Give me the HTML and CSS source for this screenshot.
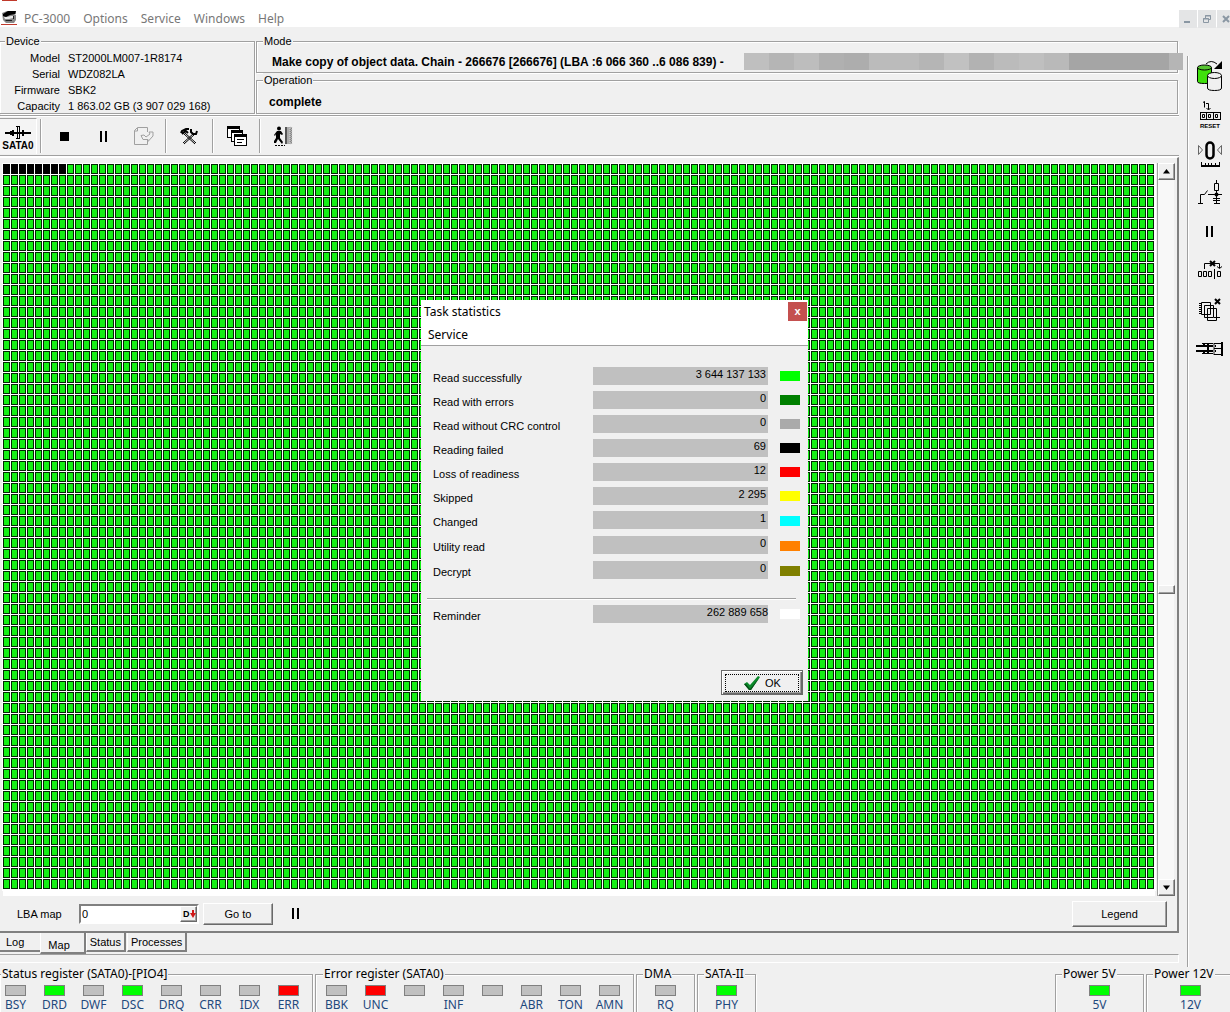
FILE: index.html
```html
<!DOCTYPE html>
<html lang="en">
<head>
<meta charset="utf-8">
<title>PC-3000</title>
<link rel="stylesheet" href="styles.css">
</head>
<body>
<div class="app">
  <header class="menubar">
    <svg class="logo" width="16" height="28" viewBox="0 0 16 28" aria-hidden="true">
      <path d="M1 0h15v1H1z" fill="#c0392b"/>
      <path d="M1 13l5-2h9v3l-2 1h2v5l-2 3H5l-3-3z" fill="#888"/>
      <path d="M2 14l5-3h8l-1 3-5 1-4 2-3-1z" fill="#000"/>
      <path d="M3 17h3l4-1h2v2l-4 1-4 0z" fill="#e8e8e8"/>
      <path d="M4 20h7v1H5zM12 16h1v3h-1z" fill="#222"/>
      <path d="M0 24h16v1H0z" fill="#c0392b"/>
    </svg>
    <nav class="menu">
      <a href="#">PC-3000</a><a href="#">Options</a><a href="#">Service</a><a href="#">Windows</a><a href="#">Help</a>
    </nav>
    <div class="winbtns">
      <button aria-label="Minimize"><svg width="18" height="18"><path d="M5 11h6v2H5z" fill="#8a97a3"/></svg></button>
      <button aria-label="Restore"><svg width="18" height="18" fill="none" stroke="#8a97a3"><path d="M7.500 8V5.500h5v4h-2M7 6h6M5.500 8.500h5v4h-5zM5 9h6"/></svg></button>
      <button aria-label="Close"><svg width="18" height="18" fill="none" stroke="#8a97a3" stroke-width="2"><path d="M6 6l6 6M12 6l-6 6"/></svg></button>
    </div>
  </header>

  <div class="body">
    <main class="main">
      <section class="info">
        <fieldset class="group device">
          <legend>Device</legend>
          <dl>
            <dt>Model</dt><dd>ST2000LM007-1R8174</dd>
            <dt>Serial</dt><dd>WDZ082LA</dd>
            <dt>Firmware</dt><dd>SBK2</dd>
            <dt>Capacity</dt><dd>1 863.02 GB (3 907 029 168)</dd>
          </dl>
        </fieldset>
        <div class="info-right">
          <fieldset class="group mode">
            <legend>Mode</legend>
            <div class="mode-line"><b>Make copy of object data. Chain - 266676 [266676] (LBA :6 066 360 ..6 086 839) -</b><span class="redacted"></span></div>
          </fieldset>
          <fieldset class="group operation">
            <legend>Operation</legend>
            <b>complete</b>
          </fieldset>
        </div>
      </section>

      <section class="toolbar">
        <button class="sata"><svg width="28" height="14" shape-rendering="crispEdges"><path d="M1 6h26v2H1zM8 4h2v6H8zM18 4h2v6h-2zM12 0h4v1h-4zM12 12h4v1h-4zM13 0h1v13h-1zM15 0h1v13h-1zM6 5h2v4H6z"/></svg>SATA0</button>
        <span class="sep"></span>
        <button class="tool" aria-label="Stop"><svg width="20" height="20" shape-rendering="crispEdges"><path d="M5 6h9v9H5z"/></svg></button>
        <button class="tool" aria-label="Pause"><svg width="20" height="20" shape-rendering="crispEdges"><path d="M6 5h2v11H6zM11 5h2v11h-2z"/></svg></button>
        <button class="tool" aria-label="Copy"><svg width="22" height="20" fill="none" stroke="#a0a0a0"><path d="M15.500 6V1.500H5.500L2.500 4.500V18.500H15.500V13M5.500 2V5H2.500M9 9.500l2 4h5v2l5-5.500V6h-4l1 2-4 3-2-2z"/></svg></button>
        <span class="sep"></span>
        <button class="tool" aria-label="Tools"><svg width="20" height="20" fill="none" stroke="#000"><path d="M5 7l11 10M4 8l11 10M14 7L3 17M15 8L4 18"/><path d="M1 7l1-2 4-2h3M2 8l4-3 2 2M11 3v3l2 2h3l1-3" stroke-width="2"/></svg></button>
        <span class="sep"></span>
        <button class="tool" aria-label="Windows"><svg width="20" height="22" shape-rendering="crispEdges" fill="#fff" stroke="#000"><path d="M.5 1.500h12v11H.5z"/><path d="M0 2.500h13" stroke-width="3"/><path d="M4.500 5.500h11v11h-11z"/><path d="M4 6.500h12" stroke-width="3"/><path d="M7.500 9.500h12v11h-12z"/><path d="M7 10.500h13" stroke-width="2"/><path d="M10 14.500h7M10 17.500h5"/></svg></button>
        <span class="sep"></span>
        <button class="tool" aria-label="Exit"><svg width="20" height="22"><path d="M11 2h7v17h-7z" fill="#aaa"/><path d="M11 2h2v17h-2z" fill="#555"/><path d="M16 2h2v17h-2z" fill="#888" stroke="#ddd" stroke-dasharray="1 1"/><circle cx="5" cy="3.500" r="2"/><path d="M3 6h4l2 3-1 1-2-1v4l3 4-1 2-4-5-2 4H0v-2l2-3V9l-1 2-1-1z"/><path d="M1 20.500h10" stroke="#000" stroke-dasharray="2 1"/></svg></button>
      </section>

      <section class="panel">
        <div class="map-row">
          <svg class="map" role="img" aria-label="Sector map">
            <defs>
              <pattern id="cell" width="8" height="11" patternUnits="userSpaceOnUse">
                <rect width="7" height="10" fill="#002800"/>
                <rect x="1" y="1" width="5" height="8" fill="#14f014"/>
              </pattern>
              <pattern id="bad" width="8" height="11" patternUnits="userSpaceOnUse"><rect width="7" height="10"/></pattern>
            </defs>
            <rect width="100%" height="100%" fill="url(#cell)"/>
            <rect width="64" height="11" fill="#fff"/>
            <rect width="64" height="11" fill="url(#bad)"/>
          </svg>
          <div class="scroll">
            <button aria-label="Scroll up"><svg width="8" height="5"><path d="M0 4.500h7L3.500 0z"/></svg></button>
            <span class="thumb"></span>
            <button aria-label="Scroll down"><svg width="8" height="5"><path d="M0 .5h7L3.500 5z"/></svg></button>
          </div>
        </div>
        <div class="controls">
          <label for="lba">LBA map</label>
          <span class="field"><input id="lba" type="text" value="0"><button class="dec" aria-label="Decimal">D<svg width="6" height="8"><path d="M2 0h2v3h2L3 8 0 3h2z" fill="#d01818"/></svg></button></span>
          <button class="btn goto">Go to</button>
          <svg class="pause" width="8" height="11" shape-rendering="crispEdges" aria-hidden="true"><path d="M0 0h2v11H0zM5 0h2v11H5z"/></svg>
          <button class="btn legend-btn">Legend</button>
        </div>
      </section>

      <nav class="tabs"><button class="t-log">Log</button><button class="on">Map</button><button>Status</button><button>Processes</button></nav>
      <div class="strip"></div>
    </main>

    <aside class="side">
      <button aria-label="Copy drive"><svg width="26" height="32" fill="none" stroke="#000"><path d="M.5 7.500v14q0 2 7 2t7-2v-14" fill="#3fe00c"/><ellipse cx="7.500" cy="7.500" rx="7" ry="2.500" fill="#56c431"/><path d="M10.500 15.500v12.500q0 2.500 7 2.500t7-2.500v-12.500" fill="#f0f0f0"/><ellipse cx="17.500" cy="15.500" rx="7" ry="3" fill="#f0f0f0"/><path d="M9 4q5-5 11 0"/><path d="M25 1v8h-8z" fill="#000" stroke="none"/></svg></button>
      <button aria-label="Reset counter"><svg width="26" height="30" fill="none" stroke="#000"><path d="M6 2.500l1.500-1v6M9 3.500h2.500v6M9.500 8l2 2 2-2"/><path d="M3 12.500h21M3 19.500h21M3.500 12v8M9.500 12v8M16.500 12v8M23.500 12v8"/><path d="M5.500 14.500h2v3h-2zM11.500 14.500h2v3h-2zM18.500 14.500h2v3h-2z"/><text x="13" y="28" text-anchor="middle" class="tiny">RESET</text></svg></button>
      <button aria-label="Zero position"><svg width="26" height="28" fill="none" stroke="#000"><rect x="9.500" y="2.500" width="7" height="16" rx="3.500" stroke-width="2.500"/><path d="M1.500 5.500v9l4-4.500zM24.500 5.500v9l-4-4.500z" stroke="#666"/><path d="M4 26h19" stroke-width="2"/><path d="M4.500 22v4M8.500 23v3M11.500 23v3M14.500 23v3M18.500 23v3M22.500 22v4"/></svg></button>
      <button aria-label="Power switch"><svg width="26" height="28" fill="none" stroke="#000"><path d="M1 24.500h5M3.500 24V15.500h4l3-4M11 15.500h14M19.500 1v24M16 19.500h7M16 21.500h7M17 24.500h6"/><path d="M17.500 4.500h4v7h-4z" fill="#f0f0f0"/><circle cx="19.500" cy="15.500" r="2" fill="#000" stroke="none"/></svg></button>
      <button aria-label="Pause"><svg width="26" height="26" shape-rendering="crispEdges"><path d="M9 7h2v11H9zM14 7h2v11h-2z"/></svg></button>
      <button aria-label="Skip block"><svg width="26" height="28" fill="none" stroke="#000"><path d="M1.500 14.500h3v5h-3zM6.500 14.500h3v5h-3zM11.500 14.500h3v5h-3zM20.500 14.500h3v5h-3zM17.500 12v10M7.500 12V6.500h15V11M20 9.500l2.500 2 2.500-2"/><path d="M13 4l5 5M18 4l-5 5" stroke-width="2"/></svg></button>
      <button aria-label="Delete pages"><svg width="26" height="24" fill="#f0f0f0" stroke="#000"><path d="M4.500 4.500h9v12h-9zM7.500 7.500h9v12h-9zM10.500 10.500h9v12h-9z"/><path d="M2 5.500h3M2 7.500h3M2 9.500h3M2 11.500h3M2 13.500h3M2 15.500h3M17 19.500h6M19.500 17v5"/><path d="M18 1l5 5M23 1l-5 5" stroke-width="2"/></svg></button>
      <button aria-label="Connector"><svg width="28" height="20" fill="none" stroke="#000"><path d="M0 7h20M0 12h20" stroke-width="2"/><path d="M6 4.500h11M6 14.500h11"/><path d="M12 5v10M8 5v3M8 11v4" stroke-width="2"/><path d="M18 4v12" stroke="#888" stroke-width="2"/><path d="M18 4.500h8M18 9.500h8M18 15.500h8"/><path d="M26 3v14" stroke-width="2"/></svg></button>
    </aside>
  </div>

  <footer class="status">
    <fieldset class="group reg first"><legend>Status register (SATA0)-[PIO4]</legend>
      <div class="leds">
        <span><i></i>BSY</span><span><i class="g"></i>DRD</span><span><i></i>DWF</span><span><i class="g"></i>DSC</span><span><i></i>DRQ</span><span><i></i>CRR</span><span><i></i>IDX</span><span><i class="r"></i>ERR</span>
      </div></fieldset>
    <fieldset class="group reg"><legend>Error register (SATA0)</legend>
      <div class="leds">
        <span><i></i>BBK</span><span><i class="r"></i>UNC</span><span><i></i></span><span><i></i>INF</span><span><i></i></span><span><i></i>ABR</span><span><i></i>TON</span><span><i></i>AMN</span>
      </div></fieldset>
    <fieldset class="group small"><legend>DMA</legend><div class="leds"><span><i></i>RQ</span></div></fieldset>
    <fieldset class="group small"><legend>SATA-II</legend><div class="leds"><span><i class="g"></i>PHY</span></div></fieldset>
    <fieldset class="group power push"><legend>Power 5V</legend><div class="leds"><span><i class="g"></i>5V</span></div></fieldset>
    <fieldset class="group power"><legend>Power 12V</legend><div class="leds"><span><i class="g"></i>12V</span></div></fieldset>
  </footer>

  <section class="dialog" role="dialog" aria-labelledby="dlg-title">
    <header><h1 id="dlg-title">Task statistics</h1><button class="close" aria-label="Close">x</button></header>
    <nav><a href="#">Service</a></nav>
    <table>
      <tr><th>Read successfully</th><td><div>3 644 137 133</div></td><td><i class="c-ok"></i></td></tr>
      <tr><th>Read with errors</th><td><div>0</div></td><td><i class="c-err"></i></td></tr>
      <tr><th>Read without CRC control</th><td><div>0</div></td><td><i class="c-crc"></i></td></tr>
      <tr><th>Reading failed</th><td><div>69</div></td><td><i class="c-fail"></i></td></tr>
      <tr><th>Loss of readiness</th><td><div>12</div></td><td><i class="c-loss"></i></td></tr>
      <tr><th>Skipped</th><td><div>2 295</div></td><td><i class="c-skip"></i></td></tr>
      <tr class="tall"><th>Changed</th><td><div>1</div></td><td><i class="c-chg"></i></td></tr>
      <tr class="tall"><th>Utility read</th><td><div>0</div></td><td><i class="c-util"></i></td></tr>
      <tr class="tall"><th>Decrypt</th><td><div>0</div></td><td><i class="c-dec"></i></td></tr>
    </table>
    <hr>
    <table>
      <tr><th>Reminder</th><td><div class="flush">262 889 658</div></td><td><i class="c-rem"></i></td></tr>
    </table>
    <div class="actions"><button class="ok"><span><svg width="18" height="16"><path d="M1 9l3-2 3 3 8-9 2 1L8 15H6z" fill="#0a8a2a"/><path d="M1 9l2 0 4 5 10-12L8 15H6z" fill="#064d16"/></svg>OK</span></button></div>
  </section>
</div>
</body>
</html>
```
FILE: styles.css
```css
* { box-sizing: border-box; }
body {
  margin: 0;
  background: #f0f0f0;
  color: #000;
  font: 11px/16px "Liberation Sans", Arial, sans-serif;
}
button, input { font: inherit; color: inherit; }
button { border: 0; padding: 0; background: none; }
svg { display: block; flex: none; }
a { color: inherit; text-decoration: none; }

.app {
  position: relative;
  display: flex;
  flex-direction: column;
  min-height: 100vh;
  overflow: hidden;
}

/* Menu bar */
.menubar {
  display: flex;
  height: 27px;
  background: #fff;
  padding-left: 1px;
}
.menu {
  display: flex;
  gap: 13px;
  padding: 10px 0 0 7px;
  font: 12px/17px "Noto Sans", sans-serif;
  color: #777;
}
.winbtns {
  display: flex;
  gap: 1px;
  margin: 10px -5px 0 auto;
}
.winbtns button { width: 18px; height: 18px; background: #e4e5e6; }

/* Work area */
.body { display: flex; flex: 1; }
.main {
  flex: 1;
  min-width: 0;
  display: flex;
  flex-direction: column;
}

.group {
  margin: 0;
  padding: 0;
  min-width: 0;
  border: 1px solid #a0a0a0;
  box-shadow: 1px 1px 0 #fff, inset 1px 1px 0 #fff;
}
.group legend {
  padding: 0 1px;
  margin-left: 5px;
  line-height: 14px;
  background: #f0f0f0;
}

.info {
  display: flex;
  gap: 1px;
  padding: 7px 1px 1px 0;
  border-bottom: 1px solid #a0a0a0;
  box-shadow: 0 1px 0 #fff;
}
.device { width: 255px; border-left: 0; }
.device dl {
  display: grid;
  grid-template-columns: 60px 1fr;
  column-gap: 8px;
  height: 64px;
  margin: 0;
  padding-top: 2px;
}
.device dt { text-align: right; }
.device dd { margin: 0; }
.info-right {
  flex: 1;
  min-width: 0;
  display: flex;
  flex-direction: column;
}
.info-right .group legend { margin-left: 6px; }
.mode { height: 39px; }
.operation { height: 41px; }
.mode b, .operation b { font-size: 12px; }
.operation b { display: block; padding: 7px 0 0 12px; }
.mode-line {
  display: flex;
  align-items: center;
  margin-right: -6px;
  padding: 5px 0 0 15px;
}
.mode-line b { flex: none; min-width: 471px; }
.redacted {
  flex: 1;
  height: 17px;
  margin-left: 1px;
  background: linear-gradient(90deg,
    #bfbfbf 0 25px, #b5b5b5 0 50px, #bdbdbd 0 75px, #b0b0b0 0 100px,
    #adadad 0 125px, #bbb 0 175px, #b5b5b5 0 200px, #c1c1c1 0 225px,
    #b2b2b2 0 250px, #bbb 0 275px, #bfbfbf 0 300px, #b9b9b9 0 325px,
    #a5a5a5 0 425px, #b5b5b5 0);
}

.toolbar {
  display: flex;
  align-items: center;
  height: 40px;
  border-bottom: 1px solid #a0a0a0;
  box-shadow: 0 1px 0 #fff;
}
.sata {
  display: flex;
  flex-direction: column;
  align-items: center;
  width: 37px;
  height: 36px;
  padding-top: 7px;
  border-top: 1px solid #a0a0a0;
  border-right: 1px solid #fff;
  background: #f4f4f4;
  font-size: 10px;
  font-weight: bold;
  line-height: 12px;
}
.sep {
  width: 2px;
  height: 34px;
  margin: 0 3px;
  background: linear-gradient(90deg, #a0a0a0 50%, #fff 50%);
}
.tool {
  display: flex;
  align-items: center;
  justify-content: center;
  width: 39px;
  height: 34px;
}

/* Map panel */
.panel {
  flex: 1;
  display: flex;
  flex-direction: column;
  margin-top: 1px;
  padding: 5px 3px 0 2px;
  border: solid;
  border-width: 1px 2px 2px 0;
  border-color: #fff #808080 #808080 #fff;
}
.map-row { flex: 1; display: flex; }
.map {
  flex: 1;
  min-width: 0;
  height: auto;
  margin: 1px 0 6px 1px;
  background: #fff;
  box-shadow: 0 0 0 1px #fff, 0 6px 0 #fff;
}
.scroll {
  display: flex;
  flex-direction: column;
  justify-content: space-between;
  width: 17px;
  margin-left: 2px;
  border-left: 1px solid #a0a0a0;
  background: #f8f8f8;
}
.scroll button, .thumb, .btn, .dec {
  border: 1px solid;
  border-color: #fff #696969 #696969 #fff;
  box-shadow: inset -1px -1px 0 #a0a0a0;
  background: #f0f0f0;
}
.scroll button {
  display: flex;
  align-items: center;
  justify-content: center;
  width: 17px;
  height: 17px;
}
.thumb { width: 17px; height: 9px; margin-top: 120px; }

.controls {
  display: flex;
  align-items: center;
  height: 35px;
  padding: 0 7px 0 15px;
}
.controls label { width: 62px; }
.field {
  display: flex;
  width: 120px;
  height: 20px;
  border: 2px solid;
  border-color: #808080 #fff #fff #808080;
  background: #fff;
}
.field input {
  flex: 1;
  min-width: 0;
  border: 0;
  padding: 0 1px;
  background: none;
  outline: 0;
}
.dec {
  display: flex;
  align-items: center;
  width: 17px;
  padding-left: 2px;
  font-size: 9px;
  font-weight: bold;
}
.btn { height: 22px; }
.goto { width: 70px; margin: 0 19px 0 4px; }
.legend-btn { width: 95px; height: 26px; margin-left: auto; }

.tabs { display: flex; height: 21px; align-items: flex-start; }
.tabs button {
  height: 19px;
  padding: 0 3px;
  margin-right: 1px;
  border: solid;
  border-width: 0 2px 2px 1px;
  border-color: #fff #808080 #808080 #fff;
}
.tabs .t-log { padding: 0 16px 0 6px; border-width: 0 0 2px; margin: 0; }
.tabs .on { height: 21px; padding: 4px 14px 0 7px; margin: 0; }
.strip {
  height: 9px;
  margin-bottom: 4px;
  border: solid;
  border-width: 1px 1px 1px 0;
  border-color: #a0a0a0 #fff #fff;
}

.side {
  display: flex;
  flex-direction: column;
  width: 43px;
  margin: 29px 0 0 8px;
  padding-left: 2px;
  border-left: 1px solid #a0a0a0;
  box-shadow: inset 1px 0 0 #fff;
}
.side button {
  display: flex;
  align-items: center;
  justify-content: center;
  height: 39px;
}
.tiny {
  font: bold 6px "Liberation Sans", Arial, sans-serif;
  fill: #000;
  stroke: none;
}

/* Status bar */
.status {
  display: flex;
  gap: 2px;
  height: 45px;
  font: 12px/15px "Noto Sans", sans-serif;
}
.status .group { height: 60px; }
.status .group legend { line-height: 14px; margin-left: 6px; padding: 0 1px; }
.status .first legend { margin-left: 1px; }
.reg { width: 319px; padding-left: 1px; }
.status .first { width: 313px; border-left: 0; padding: 0; }
.small { width: 59px; }
.power { width: 89px; }
.power:last-child { margin-right: -5px; }
.push { margin-left: auto; }
.leds { display: flex; padding-top: 4px; color: #1f497d; }
.leds span { width: 39px; text-align: center; }
.first .leds { margin-left: -4px; }
.small .leds, .power .leds { justify-content: center; }
.leds i {
  display: block;
  width: 21px;
  height: 11px;
  margin: 0 auto 1px;
  border: 1px solid #808080;
  background: #c0c0c0;
}
.leds .g { background: #0f0; }
.leds .r { background: #f00; }

/* Task statistics window */
.dialog {
  position: absolute;
  top: 300px;
  left: 50%;
  width: 387px;
  height: 401px;
  margin-left: -194px;
  display: flex;
  flex-direction: column;
  background: #f0f0f0;
}
.dialog header {
  display: flex;
  justify-content: space-between;
  height: 24px;
  padding: 2px 1px 0 3px;
  background: #fff;
}
.dialog h1 { margin: 0; font: 12px/19px "Noto Sans", sans-serif; }
.close {
  width: 19px;
  height: 19px;
  background: #c4504f;
  color: #fff;
  font-weight: bold;
  line-height: 17px;
}
.dialog nav {
  height: 22px;
  padding: 2px 7px 0;
  border-bottom: 1px solid #a0a0a0;
  background: #fff;
  font: 12px/17px "Noto Sans", sans-serif;
}
.dialog table {
  width: 367px;
  margin: 21px 0 0 12px;
  border-collapse: collapse;
  table-layout: fixed;
}
.dialog tr { height: 24px; }
.dialog .tall { height: 25px; }
.dialog th, .dialog td { padding: 0; vertical-align: top; }
.dialog th {
  width: 160px;
  padding-top: 3px;
  font-weight: normal;
  text-align: left;
}
.dialog td:last-child { width: 32px; }
.dialog td div {
  height: 18px;
  padding-right: 2px;
  background: #c0c0c0;
  line-height: 15px;
  text-align: right;
}
.dialog td .flush { padding: 0; }
.dialog td i { display: block; width: 20px; height: 10px; margin: 4px 0 0 12px; }
.dialog .tall i { margin-top: 5px; }
.dialog hr {
  width: 369px;
  height: 2px;
  margin: 12px 0 0 6px;
  border: 0;
  background: linear-gradient(#a0a0a0 50%, #fff 50%);
}
.dialog hr + table { margin-top: 5px; }
.c-ok { background: #0f0; }
.c-err { background: #008000; }
.c-crc { background: #aaa; }
.c-fail { background: #000; }
.c-loss { background: #f00; }
.c-skip { background: #ff0; }
.c-chg { background: #0ff; }
.c-util { background: #ff8000; }
.c-dec { background: #808000; }
.c-rem { background: #fff; }
.actions { display: flex; justify-content: flex-end; margin-top: auto; padding: 0 5px 6px 0; }
.ok {
  width: 82px;
  height: 25px;
  padding: 2px;
  border: 1px solid #696969;
  box-shadow: inset 1px 1px 0 #fff, inset -1px -1px 0 #696969, inset -2px -2px 0 #a0a0a0;
}
.ok span {
  display: flex;
  align-items: center;
  justify-content: center;
  gap: 4px;
  height: 18px;
  margin: 0 1px;
  border: 1px dotted #000;
}
```
